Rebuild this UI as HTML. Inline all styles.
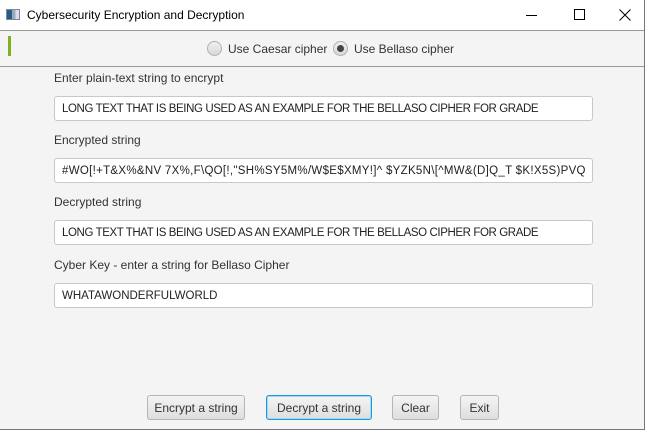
<!DOCTYPE html>
<html><head><meta charset="utf-8"><style>
*{margin:0;padding:0;box-sizing:border-box}
body{width:653px;height:431px;background:#fff;font-family:"Liberation Sans",sans-serif;font-size:12px;color:#333;position:relative;overflow:hidden}
.win{position:absolute;left:0;top:0;width:645px;height:430px;border-right:1px solid #777;border-bottom:1px solid #777;background:#f4f4f4}
.title{position:absolute;left:0;top:0;width:644px;height:31px;background:#fff;border-bottom:1px solid #999}
.title span{position:absolute;left:27px;top:8px;font-size:12px;color:#000}
.tb{position:absolute;left:0;top:31px;width:644px;height:36px;border-bottom:1px solid #999;background:#f4f4f4}
.abs{position:absolute;white-space:nowrap}
.field{position:absolute;left:54px;width:539px;height:25px;background:#fff;border:1px solid #c8c8c8;border-radius:3px;padding:6px 0 0 7px;font-size:11.5px;color:#222;white-space:nowrap;overflow:hidden}
.lbl{position:absolute;left:54px;font-size:12px;color:#333}
.btn{position:absolute;top:395px;height:25px;border:1px solid #b5b5b5;border-radius:3px;background:linear-gradient(#f4f4f4,#dedede);text-align:center;padding-top:5px;font-size:12px;color:#333}
.radio{position:absolute;width:15px;height:15px;border-radius:50%;border:1px solid #b0b0b0;background:linear-gradient(#f0f0f0,#d8d8d8)}
</style></head><body>
<div class="win">
<div class="title">
<div class="abs" style="left:6px;top:9px;width:14px;height:11px;border:1px solid #7a8a9a;background:linear-gradient(90deg,#2a5a8a 0 40%,#9ab 40% 70%,#dde 70%)"></div>
<span>Cybersecurity Encryption and Decryption</span>
<div class="abs" style="left:526px;top:15px;width:11px;height:1px;background:#000"></div>
<div class="abs" style="left:574px;top:9px;width:11px;height:11px;border:1px solid #000"></div>
<svg class="abs" style="left:619px;top:9px" width="12" height="12"><path d="M0.5 0.5L11.5 11.5M11.5 0.5L0.5 11.5" stroke="#000" stroke-width="1"/></svg>
</div>
<div class="tb">
<div class="abs" style="left:8px;top:5px;width:3px;height:20px;background:#7fb21c"></div>
<div class="radio" style="left:207px;top:10px"></div>
<div class="abs" style="left:228px;top:11px">Use Caesar cipher</div>
<div class="radio" style="left:333px;top:10px"><div style="position:absolute;left:3px;top:3px;width:7px;height:7px;border-radius:50%;background:#444"></div></div>
<div class="abs" style="left:354px;top:11px">Use Bellaso cipher</div>
</div>
<div class="lbl" style="top:71px">Enter plain-text string to encrypt</div>
<div class="field" style="top:96px;letter-spacing:-0.4px">LONG TEXT THAT IS BEING USED AS AN EXAMPLE FOR THE BELLASO CIPHER FOR GRADE</div>
<div class="lbl" style="top:133px">Encrypted string</div>
<div class="field" style="top:158px;letter-spacing:0.3px">#WO[!+T&amp;X%&amp;NV 7X%,F\QO[!,"SH%SY5M%/W$E$XMY!]^ $YZK5N\[^MW&amp;(D]Q_T $K!X5S)PVQ</div>
<div class="lbl" style="top:195px">Decrypted string</div>
<div class="field" style="top:220px;letter-spacing:-0.4px">LONG TEXT THAT IS BEING USED AS AN EXAMPLE FOR THE BELLASO CIPHER FOR GRADE</div>
<div class="lbl" style="top:258px">Cyber Key - enter a string for Bellaso Cipher</div>
<div class="field" style="top:283px">WHATAWONDERFULWORLD</div>
<div class="btn" style="left:147px;width:98px">Encrypt a string</div>
<div class="btn" style="left:266px;width:106px;border:1px solid #1a9ad8;box-shadow:inset 0 0 0 1px #a8d8f0">Decrypt a string</div>
<div class="btn" style="left:392px;width:47px">Clear</div>
<div class="btn" style="left:460px;width:39px">Exit</div>
</div>
</body></html>
